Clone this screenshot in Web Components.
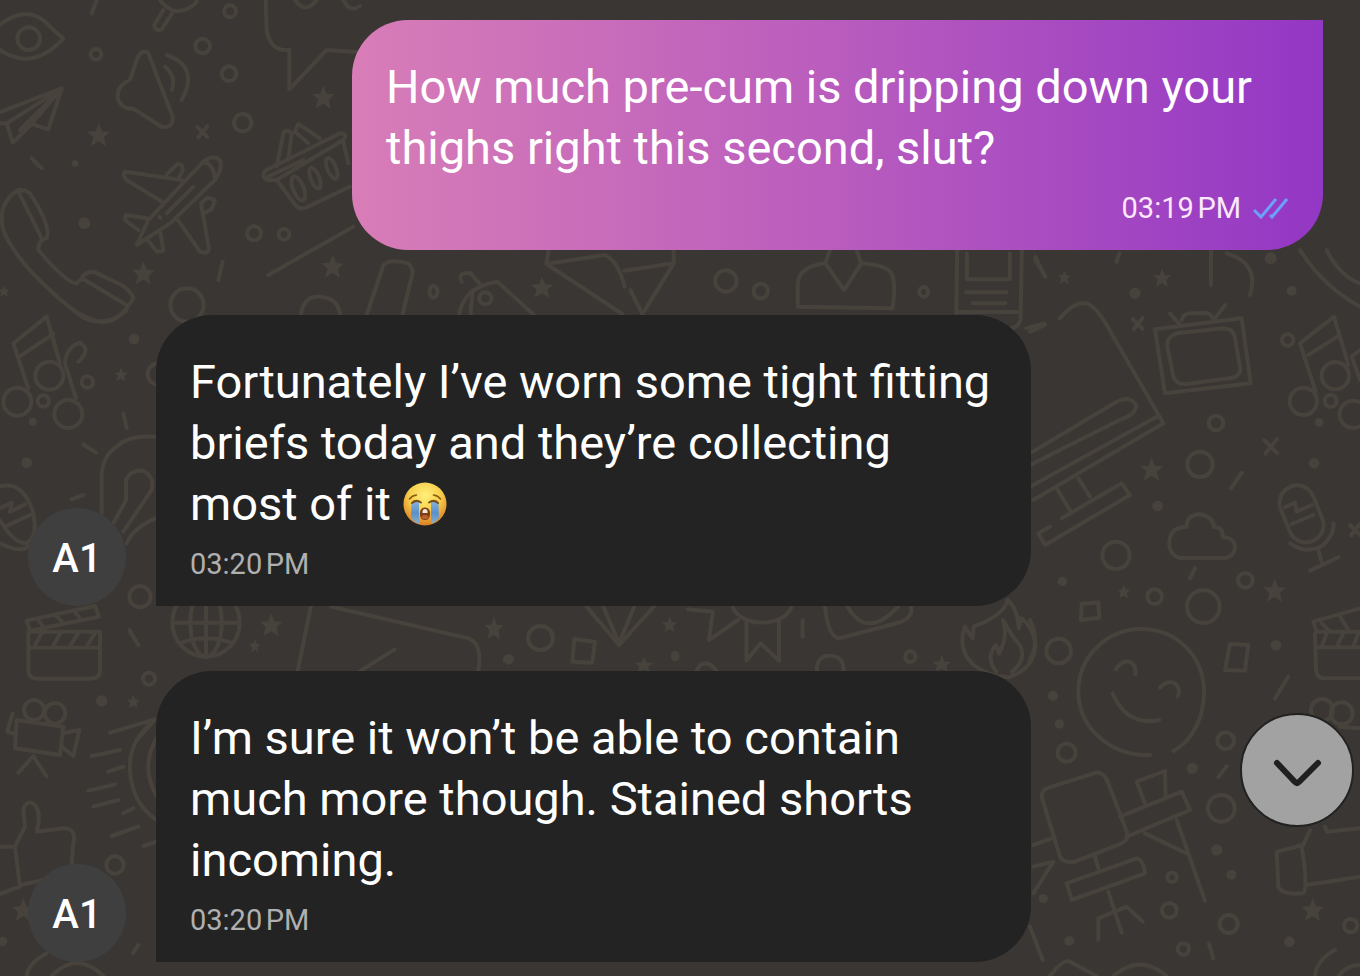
<!DOCTYPE html>
<html lang="en">
<head>
<meta charset="utf-8">
<meta name="viewport" content="width=device-width, initial-scale=1">
<title>Chat</title>
<style>
  html, body { margin: 0; min-height: 100%; background: #3a3633; }
  body { font-family: Roboto, "Noto Sans", sans-serif; }
</style>
</head>
<body>
<chat-view>
  <chat-message kind="outgoing" time="03:19&#8239;PM">How much pre-cum is dripping down your thighs right this second, slut?</chat-message>
  <chat-message kind="incoming" initials="A1" time="03:20&#8239;PM">Fortunately I’ve worn some tight fitting briefs today and they’re collecting most of it <crying-emoji></crying-emoji></chat-message>
  <chat-message kind="incoming" initials="A1" time="03:20&#8239;PM">I’m sure it won’t be able to contain much more though. Stained shorts incoming.</chat-message>
</chat-view>

<template id="wallpaper">
  <style>
    :host { display: block; position: absolute; inset: 0; overflow: hidden; }
    svg { display: block; width: 100%; height: 100%; }
    svg * { vector-effect: non-scaling-stroke; }
    .fill { fill: #47423c; stroke: none; }
  </style>
  <svg viewBox="0 0 1360 976" preserveAspectRatio="xMinYMin slice" fill="none" stroke="#47423b" stroke-width="4" stroke-linecap="round" stroke-linejoin="round" aria-hidden="true">
    <defs>
      <path id="star" d="M0-36 10-11 34-9 16 7 22 34 0 19-23 33-16 6-34-10-9-11Z" class="fill"/>
      <path id="cross" d="M-15-15 15 15M15-18-12 16"/>
    </defs>
    <!-- eye, plane, megaphone, phone, basket -->
    <g transform="scale(.33333)">
      <path d="M-20 90Q80 0 150 80L190 116Q130 180 70 176 20 170-10 140"/><circle cx="86" cy="116" r="34"/>
      <path d="M290 0 275 40M480 0Q500 28 530 34 570 30 590 5M490 30 463 75Q465 95 485 88L515 42"/>
      <circle cx="690" cy="34" r="18"/><circle cx="608" cy="138" r="22"/><circle cx="288" cy="163" r="16"/><circle cx="687" cy="221" r="22"/><circle cx="728" cy="368" r="26"/>
      <path d="M797 0 800 90Q810 155 868 150L868 268 980 150 1070 156M885 0Q915 45 950 0M1030 0Q1050 40 1080 18"/>
      <path d="M390 240 412 175Q425 145 445 160L518 350Q520 390 480 378L400 326Q370 330 355 300 345 260 390 240ZM500 165Q600 200 545 300M495 200Q530 230 515 270"/>
      <path d="M-10 340 185 265 145 388 95 372 38 428 20 370-10 370M20 370 185 265 60 390M95 372 185 265"/>
      <use href="#star" x="296" y="405"/><use href="#star" x="970" y="292"/><use href="#star" x="998" y="800"/><use href="#star" x="430" y="820"/><use href="#star" transform="translate(12 874) scale(.5)"/>
      <use href="#cross" x="607" y="396"/>
      <path d="M95 475 125 505M668 785 655 840"/><circle cx="225" cy="490" r="10" class="fill"/><circle cx="253" cy="670" r="18" class="fill"/>
      <path d="M545 540 375 515Q365 525 380 540L485 605M500 523 532 492Q550 490 548 512L535 535M410 735 445 660 610 485Q645 460 662 485 665 510 645 540L510 670 410 735M440 655 378 645Q370 660 385 668L415 690M440 715 470 755 490 752 480 690M530 655 600 755Q625 765 627 745L603 610 622 593 645 600 635 628 610 640M610 485Q640 490 645 535M478 650 482 654M500 640 580 560"/>
      <path d="M55 570Q-10 610 10 690 40 770 150 870 240 960 310 966 360 965 400 895 395 875 365 855L280 815Q255 815 245 835L230 850Q200 850 115 750 115 720 140 715 155 680 90 580 75 568 55 570M55 575 125 715M245 835 375 912"/>
      <path d="M830 540 800 540Q780 525 800 510L1020 400Q1045 400 1030 420L830 540 890 620Q905 630 920 622L1050 560M830 500 850 400Q860 385 875 400L865 480M960 415 895 372 885 395 925 430M1030 425 1045 490M805 530 910 480"/>
      <ellipse cx="895" cy="565" rx="16" ry="38" transform="rotate(-22 895 565)"/><ellipse cx="945" cy="535" rx="13" ry="33" transform="rotate(-22 945 535)"/><ellipse cx="995" cy="505" rx="13" ry="33" transform="rotate(-22 995 505)"/>
      <circle cx="762" cy="700" r="21"/><circle cx="852" cy="703" r="16"/><path d="M805 825 1060 680"/><circle cx="561" cy="915" r="50"/><path d="M900 965Q905 885 960 890 1020 895 1020 950"/>
    </g>
    <!-- notes, microphone, light bulb -->
    <g transform="translate(0 310) scale(.33333)">
      <path d="M85 235 40 100 140 20 180 160M58 140 160 72M228 265 195 160Q200 110 240 98 275 120 235 155"/><circle cx="148" cy="197" r="42"/><circle cx="52" cy="275" r="42"/><circle cx="205" cy="312" r="42"/><circle cx="262" cy="216" r="17"/><circle cx="130" cy="273" r="17"/>
      <circle cx="402" cy="87" r="16" class="fill"/><circle cx="80" cy="458" r="16" class="fill"/><circle cx="98" cy="335" r="12" class="fill"/><circle cx="475" cy="192" r="32"/><use href="#star" transform="translate(363 194) scale(.6)"/>
      <path d="M220 0Q260 40 310 34 350 30 380 0M370 310 380 355M250 403 288 428M215 568 250 555"/>
      <path d="M480 382Q390 370 350 410 305 440 305 500L305 610M340 640 378 570 378 510Q390 480 430 482 465 500 455 540L370 665M380 700Q400 650 480 620"/>
      <path d="M0 530Q70 510 100 610 115 680 80 700 40 700 0 630M0 595 35 578 30 605 75 583M15 650 90 615M0 700Q60 730 85 710"/>
      <circle cx="420" cy="860" r="32"/><path d="M390 965 415 1005"/>
    </g>
    <!-- laptop, television, notes, cloud, microphone -->
    <g transform="translate(1030 250) scale(.33333)">
      <path d="M15 30 45 78M268 10 260 35M543 0 543 105M590 10Q690 40 660 135M810 0Q880 110 990 170M890 0Q930 80 990 100M0 245 45 225M90 205Q130 155 165 160 190 160 230 225L400 520 10 750M380 500 0 710M0 610 260 455Q300 435 318 465 320 490 280 505L0 645M80 715 125 790M145 685 180 740M95 805 275 700 300 735 45 885 25 850 60 830"/>
      <use href="#star" transform="translate(103 82) scale(.6)"/><use href="#star" transform="translate(396 84) scale(.8)"/><use href="#star" x="365" y="658"/><circle cx="315" cy="130" r="17" class="fill"/><circle cx="785" cy="122" r="15" class="fill"/><circle cx="722" cy="25" r="18" class="fill"/><circle cx="383" cy="768" r="16" class="fill"/><circle cx="852" cy="640" r="16" class="fill"/>
      <use href="#cross" x="323" y="222"/><use href="#cross" transform="translate(722 590) scale(1.3)"/><use href="#cross" x="975" y="840"/>
      <path d="M375 238 635 205 662 400 405 430ZM440 250Q410 260 412 290L430 380Q440 405 470 402L600 385Q635 380 630 350L615 265Q610 235 580 235ZM455 210Q460 190 485 190L525 188Q545 190 550 210M420 190 450 225M585 165 550 212"/>
      <circle cx="773" cy="270" r="17"/><circle cx="558" cy="519" r="22"/><circle cx="510" cy="643" r="38"/><circle cx="258" cy="916" r="41"/><path d="M635 668 603 715M495 955 480 985"/>
      <path d="M857 425 810 280 912 200 955 345M835 315 930 255M990 300 965 320 990 390"/><circle cx="916" cy="377" r="41"/><circle cx="820" cy="454" r="41"/><circle cx="970" cy="493" r="41"/><circle cx="902" cy="453" r="18"/><circle cx="867" cy="517" r="13" class="fill"/>
      <path d="M450 924Q415 915 418 870 425 830 470 830 470 795 510 793 550 800 552 832 580 830 578 860 620 865 614 900 605 925 580 924Z"/>
      <rect x="762" y="704" width="105" height="176" rx="52" transform="rotate(-22 814 792)"/><path d="M765 772 795 758 800 785 845 765M785 822 850 795M780 880Q830 915 880 885 915 850 910 820M865 900 875 935M840 962 925 922"/>
    </g>
    <!-- smiley, clapperboard, desk, chair, thumb -->
    <g transform="translate(1030 570) scale(.33333)">
      <circle cx="97" cy="34" r="14" class="fill"/><circle cx="374" cy="80" r="22"/><circle cx="520" cy="110" r="49"/><circle cx="646" cy="31" r="22"/><use href="#star" x="734" y="62"/><use href="#star" transform="translate(281 65) scale(.6)"/>
      <path d="M155 102 205 97 208 143 153 150ZM600 222 655 225 645 302 585 300ZM775 320 735 385M590 588 565 622M537 1120 550 1165"/><circle cx="86" cy="243" r="37"/><circle cx="738" cy="226" r="16" class="fill"/><circle cx="69" cy="378" r="15" class="fill"/><circle cx="88" cy="462" r="14" class="fill"/><circle cx="110" cy="548" r="27"/><circle cx="587" cy="512" r="25"/><circle cx="487" cy="595" r="17" class="fill"/><circle cx="574" cy="715" r="40"/>
      <path d="M360 555C240 560 145 470 145 365 145 260 230 177 335 177 440 177 522 260 522 365 522 440 490 510 430 543M258 298Q275 270 300 275 320 285 316 313M390 353Q410 330 435 340 455 358 443 380M248 370Q290 470 388 450"/>
      <path d="M0 150Q30 210 0 270M990 115 850 155 860 185 990 185M855 190 858 300Q860 325 885 325L990 325M860 232 990 232M875 160 900 185M930 140 955 180M890 190 875 230M940 190 920 230M985 190 970 230"/>
      <circle cx="876" cy="420" r="33"/><circle cx="935" cy="430" r="33"/><path d="M930 470 990 475"/>
      <path d="M50 655 200 607Q225 610 235 640L292 790Q295 810 275 820L135 875Q100 880 90 860L38 690Q30 665 50 655M270 740 455 665 480 720 290 800M345 700 320 635 405 603 407 680M440 750 525 993M345 790 470 850M195 860 205 895M110 940 320 865Q340 870 345 910L125 990ZM235 965 275 1088M205 1110 205 1045 290 1010 338 1055M10 825 65 805M10 890 70 875 10 970M0 1070 38 1170M60 1218Q100 1165 120 1175L200 1218M250 1218Q330 1150 410 1218"/>
      <circle cx="560" cy="840" r="17" class="fill"/><circle cx="426" cy="922" r="14"/><circle cx="604" cy="914" r="15" class="fill"/><circle cx="40" cy="986" r="14" class="fill"/><circle cx="418" cy="1021" r="22"/><circle cx="596" cy="1062" r="27"/><circle cx="118" cy="1113" r="15" class="fill"/><circle cx="460" cy="1137" r="17"/><circle cx="778" cy="1115" r="16" class="fill"/><circle cx="962" cy="1067" r="20"/><use href="#star" x="848" y="1020"/>
      <path d="M840 780 820 825 740 845 745 950Q755 975 820 970 835 950 815 830M830 945 990 920M885 770 890 785 990 775M855 1218Q860 1170 915 1140M925 1218Q950 1185 990 1185"/>
    </g>
    <!-- clapperboard, film camera, thumb, sun -->
    <g transform="translate(0 590) scale(.33333)">
      <path d="M80 92 285 48 297 80 90 122ZM85 125H300V240Q300 265 275 266H110Q85 265 85 240ZM85 173H300M115 88 130 112M165 75 190 98M220 60 240 85M125 130 105 165M180 130 160 168M235 130 210 168M285 130 260 168"/>
      <circle cx="447" cy="266" r="18"/><circle cx="305" cy="333" r="17" class="fill"/><use href="#star" transform="translate(400 335) scale(.6)"/><path d="M388 120 415 165"/>
      <circle cx="102" cy="360" r="30"/><circle cx="165" cy="370" r="31"/><path d="M50 390 190 410 180 495 45 475ZM190 430 238 420 220 498 185 470M38 370 22 425 42 430M55 548 100 498 140 560"/>
      <path d="M0 770 45 770 75 710 70 660Q80 625 105 645 125 670 110 725L190 715Q230 715 220 760L215 820M45 770 60 890 0 912M60 885 130 870M330 428 465 388 415 445M275 498 360 480M325 545 370 530M265 602 345 583M280 650 355 630M370 670 400 655M335 738 415 710M430 768 470 755M465 390Q385 450 390 540 395 640 470 690M470 445Q420 530 470 620"/>
      <circle cx="345" cy="825" r="26"/><use href="#star" x="70" y="960"/><circle cx="8" cy="1054" r="14" class="fill"/><path d="M415 1065 398 1090M80 1158Q85 1120 140 1090M155 1158Q230 1080 310 1158"/>
    </g>
    <!-- strip between the two incoming bubbles -->
    <g transform="translate(160 590) scale(.56122 .33333)">
      <ellipse cx="82" cy="98" rx="60" ry="102"/><ellipse cx="82" cy="98" rx="28" ry="102"/><path d="M22 98H142M82 0V200M35 160Q80 130 130 160"/>
      <path d="M270 40 245 245M305 50 550 145Q575 160 567 245M418 178 355 245M760 50 818 165 880 50M790 50 818 160 845 50M940 58 985 65 978 150 1030 90M1045 90 1045 212 1070 160 1103 212 1103 90M1145 90V140M1185 50Q1190 140 1210 145L1300 105Q1345 90 1338 50M1225 50Q1260 150 1315 50"/>
      <ellipse cx="1073" cy="40" rx="53" ry="58"/><ellipse cx="678" cy="144" rx="22" ry="36"/><path d="M738 148 775 155 770 218 735 215ZM955 245Q970 195 993 245M1170 245Q1170 195 1195 197 1220 200 1218 245"/><ellipse cx="1337" cy="200" rx="9" ry="16"/>
      <use href="#star" transform="translate(198 105) scale(.6 1)"/><use href="#star" transform="translate(595 115) scale(.5 1)"/><use href="#star" transform="translate(169 168) scale(.3 .6)"/><use href="#star" transform="translate(908 104) scale(.4 .7)"/><use href="#star" transform="translate(862 225) scale(.5 .7)"/><use href="#star" transform="translate(1393 222) scale(.5 .7)"/><ellipse cx="621" cy="208" rx="10" ry="16" class="fill"/><ellipse cx="918" cy="198" rx="8" ry="16" class="fill"/>
      <path d="M1510 30Q1505 75 1450 110L1448 145 1434 110Q1420 180 1450 225 1475 260 1512 262 1560 235 1560 160 1555 110 1535 85L1530 115Q1530 60 1510 30M1490 245Q1470 200 1490 165L1495 190Q1512 140 1502 90 1518 140 1532 165 1545 210 1518 245"/>
    </g>
    <!-- strip below the outgoing bubble -->
    <g transform="translate(350 240) scale(.44643 .33333)">
      <path d="M38 222 75 75Q90 55 130 70 145 90 138 110L118 222M245 222Q255 140 330 125L410 222M270 222 275 150M250 125Q240 95 270 100L290 130"/><ellipse cx="303" cy="175" rx="14" ry="18"/><ellipse cx="187" cy="155" rx="9" ry="18"/><use href="#star" transform="translate(430 143) scale(.75 .9)"/>
      <path d="M445 30 440 72 610 222M440 72 570 45Q600 60 615 140M615 92 725 70 655 222 628 150M725 30V70"/><ellipse cx="842" cy="123" rx="24" ry="32"/><ellipse cx="920" cy="153" rx="16" ry="22"/><ellipse cx="1285" cy="156" rx="10" ry="15"/>
      <path d="M1075 30 1065 70Q1005 80 1003 130L1003 200 1215 205Q1225 120 1210 95 1195 75 1145 70L1135 30M1065 70 1107 150 1145 70M1360 30 1358 220M1505 30 1502 240Q1495 265 1480 265M1382 40V118H1478V40M1380 157H1470M1395 190H1468M1358 216H1500M1535 50 1557 110M1515 265 1555 250"/>
    </g>
  </svg>
</template>

<template id="emoji">
  <style>
    :host { display: inline-block; width: 44px; height: 44px; vertical-align: -6px; }
    svg { display: block; width: 100%; height: 100%; }
  </style>
  <svg viewBox="0 0 44 44" role="img" aria-label="Loudly crying face">
    <defs>
      <radialGradient id="face" cx=".5" cy=".3" r=".72"><stop offset="0" stop-color="#fff07a"/><stop offset=".5" stop-color="#f8cf4c"/><stop offset="1" stop-color="#d97a20"/></radialGradient>
      <linearGradient id="tear" x2="0" y2="1"><stop offset="0" stop-color="#83b0d8"/><stop offset=".5" stop-color="#5b90c9"/><stop offset="1" stop-color="#8aaec8"/></linearGradient>
    </defs>
    <circle cx="22" cy="22" r="21.5" fill="url(#face)"/>
    <path d="M8.500 20H16V42Q11 40 8 36ZM28 20H35.500L36 36Q33 40 28 42Z" fill="url(#tear)"/>
    <path d="M9 21Q13 17 18 20.500M26 20.500Q31 17 35 21" stroke="#765018" stroke-width="2" fill="none" stroke-linecap="round"/>
    <path d="M6.500 17Q9 13.500 13.500 13M30.500 13Q35 13.500 37.500 17" stroke="#8c5a13" stroke-width="1.600" fill="none" stroke-linecap="round"/>
    <path d="M22 25.500C26 25.500 27.500 29 27 33 26.500 36.500 25 38 22 38S17.500 36.500 17 33C16.500 29 18 25.500 22 25.500Z" fill="#7c3d16"/>
    <path d="M19.500 29Q20 27 22 27T24.500 29V31H19.500Z" fill="#f4e6da"/><ellipse cx="22" cy="35" rx="3.500" ry="2" fill="#b8612f"/>
  </svg>
</template>

<template id="message">
  <style>
    :host { display: flex; align-items: flex-end; gap: 30px; color: #fff; }
    :host([kind="incoming"]) { padding: 0 329px 0 28px; }
    :host([kind="outgoing"]) { padding: 0 37px 0 352px; }
    :host([kind="outgoing"]) .avatar, :host([kind="incoming"]) .ticks { display: none; }
    .avatar { flex: none; box-sizing: border-box; width: 98px; height: 98px; padding-top: 2px; border-radius: 50%; background: #3f3f3f; display: flex; align-items: center; justify-content: center; font-size: 40px; font-weight: 500; }
    .bubble { flex: 1; min-width: 0; padding: 36px 34px 11px; border-radius: 56px 56px 56px 0; background: #232323; }
    :host([kind="outgoing"]) .bubble { border-radius: 56px 0 56px 56px; background: linear-gradient(90deg, #d87db7, #b95cbe 50%, #9337c5); }
    p { margin: 0; font-size: 47px; line-height: 61px; }
    footer { display: flex; align-items: center; gap: 12px; font-size: 29px; line-height: 61px; color: #b0b0b0; }
    :host([kind="outgoing"]) footer { justify-content: flex-end; color: #fbe8fb; }
    .ticks { width: 36px; height: 24px; }
  </style>
  <div class="avatar"></div>
  <div class="bubble">
    <p><slot></slot></p>
    <footer><time></time>
      <svg class="ticks" viewBox="0 0 36 24" fill="none" stroke="#6ba0fb" stroke-width="3" role="img" aria-label="Read"><path d="M1 13 8 20 23 2M17 18 19 20 34 2"/></svg>
    </footer>
  </div>
</template>

<template id="view">
  <style>
    :host { display: block; position: relative; min-height: 100vh; box-sizing: border-box; }
    main { position: relative; display: flex; flex-direction: column; gap: 65px; padding: 20px 0 14px; }
    scroll-button { position: absolute; right: 6px; bottom: 149px; }
  </style>
  <chat-wallpaper></chat-wallpaper>
  <main><slot></slot></main>
  <scroll-button></scroll-button>
</template>

<template id="scroll">
  <style>
    :host { display: block; }
    button { display: grid; place-items: center; box-sizing: border-box; width: 114px; height: 114px; padding: 0; border: 2px solid #222; border-radius: 50%; background: #a2a2a2; cursor: pointer; }
    svg { display: block; width: 50px; height: 30px; margin-top: 6px; }
  </style>
  <button type="button" aria-label="Scroll to latest message">
    <svg viewBox="0 0 50 30" fill="none" stroke="#202020" stroke-width="6" stroke-linecap="round" stroke-linejoin="round"><path d="M5 5 23 24Q25 26 27 24L46 5"/></svg>
  </button>
</template>

<script>
  class TemplateElement extends HTMLElement {
    constructor() {
      super();
      const template = document.getElementById(this.constructor.template);
      this.attachShadow({ mode: "open" }).append(template.content.cloneNode(true));
    }
  }
  customElements.define("chat-wallpaper", class extends TemplateElement { static template = "wallpaper"; });
  customElements.define("crying-emoji", class extends TemplateElement { static template = "emoji"; });
  customElements.define("scroll-button", class extends TemplateElement { static template = "scroll"; });
  customElements.define("chat-message", class extends TemplateElement {
    static template = "message";
    connectedCallback() {
      this.shadowRoot.querySelector(".avatar").textContent = this.getAttribute("initials") || "";
      this.shadowRoot.querySelector("time").textContent = this.getAttribute("time") || "";
    }
  });
  customElements.define("chat-view", class extends TemplateElement { static template = "view"; });
</script>
</body>
</html>
